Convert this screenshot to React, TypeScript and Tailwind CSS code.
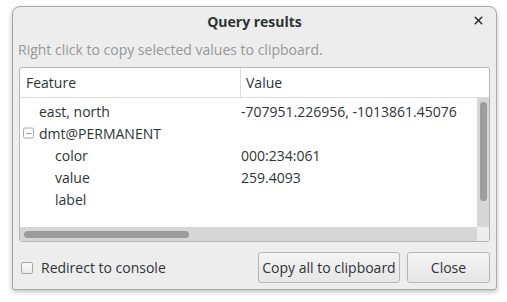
import { Minus, X } from "lucide-react";

type Row = {
  feature: string;
  value: string;
  indent: number;
  expander?: boolean;
};

const rows: Row[] = [
  { feature: "east, north", value: "-707951.226956, -1013861.45076", indent: 1 },
  { feature: "dmt@PERMANENT", value: "", indent: 1, expander: true },
  { feature: "color", value: "000:234:061", indent: 2 },
  { feature: "value", value: "259.4093", indent: 2 },
  { feature: "label", value: "", indent: 2 },
];

function TreeRow({ row }: { row: Row }) {
  return (
    <div className="flex h-[22px] items-center">
      <div
        className={`relative flex w-[221px] shrink-0 items-center ${
          row.indent === 2 ? "pl-[35px]" : "pl-[19px]"
        }`}
      >
        {row.expander && (
          <span className="absolute left-[3px] top-1/2 flex h-[11px] w-[11px] -translate-y-1/2 items-center justify-center rounded-[2px] border border-[#a8a8a8] bg-white">
            <Minus size={8} strokeWidth={2} className="text-[#6a6a6a]" />
          </span>
        )}
        {row.feature}
      </div>
      <div className="whitespace-nowrap">{row.value}</div>
    </div>
  );
}

export default function App() {
  return (
    <div
      className="h-[302px] w-[507px] bg-white pl-[12px] pt-[6px] text-[14px] text-[#2e3436]"
      style={{ fontFamily: '"Open Sans", "Noto Sans", sans-serif' }}
    >
      <div className="flex h-[284px] w-[485px] flex-col rounded-t-[8px] rounded-b-[3px] border border-[#a9a9a9] bg-[#ededed] shadow-[0_2px_5px_rgba(0,0,0,0.25)]">
        <div className="relative flex h-[27px] items-center justify-center pt-[1px] font-bold">
          Query results
          <X
            size={13}
            strokeWidth={3}
            className="absolute right-[11px] top-[7px] text-[#2e3436]"
          />
        </div>

        <div className="mt-[5px] h-[26px] pl-[5px] text-[#959898]">
          Right click to copy selected values to clipboard.
        </div>

        <div className="mx-[6px] mt-[2px] flex h-[175px] flex-col overflow-hidden rounded-[3px] border border-[#b6b6b3] bg-white">
          <div className="flex h-[30px] shrink-0 items-center border-b border-[#dcdcdc]">
            <div className="flex h-full w-[221px] items-center border-r border-[#dcdcdc] pl-[6px]">
              Feature
            </div>
            <div className="pl-[5px]">Value</div>
          </div>

          <div className="flex min-h-0 flex-1">
            <div className="flex-1 pt-[2px]">
              {rows.map((row) => (
                <TreeRow key={row.feature} row={row} />
              ))}
            </div>
            <div className="flex w-[12px] shrink-0 justify-center bg-[#d6d6d6] pt-[4px]">
              <div className="h-[99px] w-[7px] rounded-full bg-[#9c9c9c]" />
            </div>
          </div>

          <div className="flex h-[14px] shrink-0">
            <div className="flex flex-1 items-center bg-[#d6d6d6] pl-[4px]">
              <div className="h-[7px] w-[165px] rounded-full bg-[#9c9c9c]" />
            </div>
            <div className="w-[12px] bg-[#ededed]" />
          </div>
        </div>

        <div className="mt-[10px] flex items-center pl-[8px] pr-[6px]">
          <span className="h-[12px] w-[12px] rounded-[2px] border border-[#a8a8a8] bg-gradient-to-b from-[#fafafa] to-[#ececec]" />
          <span className="ml-[8px]">Redirect to console</span>
          <button className="ml-auto h-[31px] w-[142px] rounded-[3px] border border-[#b6b6b3] bg-gradient-to-b from-[#f4f4f4] to-[#e6e6e6] text-[14px] text-[#2e3436]">
            Copy all to clipboard
          </button>
          <button className="ml-[7px] h-[31px] w-[83px] rounded-[3px] border border-[#b6b6b3] bg-gradient-to-b from-[#f4f4f4] to-[#e6e6e6] text-[14px] text-[#2e3436]">
            Close
          </button>
        </div>
      </div>
    </div>
  );
}
